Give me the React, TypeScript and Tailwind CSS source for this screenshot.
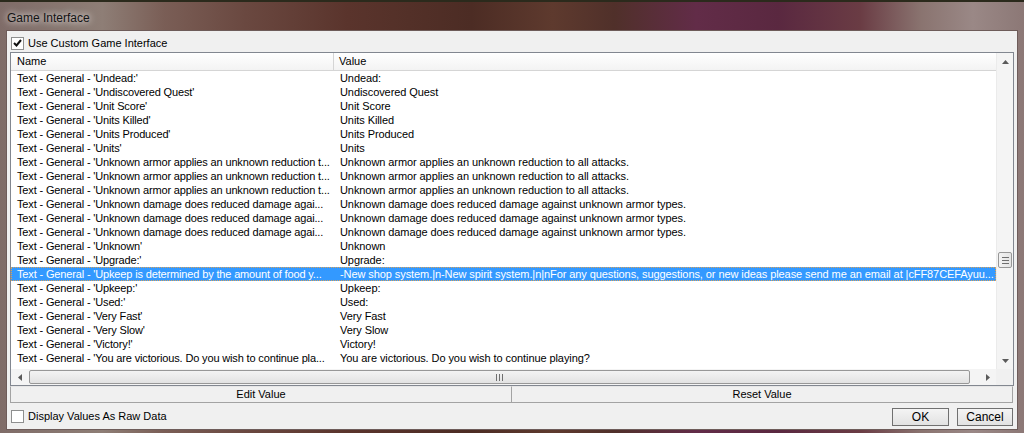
import React from 'react';

interface Row {
  name: string;
  value: string;
}

const rows: Row[] = [
  { name: "Text - General - 'Undead:'", value: 'Undead:' },
  { name: "Text - General - 'Undiscovered Quest'", value: 'Undiscovered Quest' },
  { name: "Text - General - 'Unit Score'", value: 'Unit Score' },
  { name: "Text - General - 'Units Killed'", value: 'Units Killed' },
  { name: "Text - General - 'Units Produced'", value: 'Units Produced' },
  { name: "Text - General - 'Units'", value: 'Units' },
  { name: "Text - General - 'Unknown armor applies an unknown reduction t...", value: 'Unknown armor applies an unknown reduction to all attacks.' },
  { name: "Text - General - 'Unknown armor applies an unknown reduction t...", value: 'Unknown armor applies an unknown reduction to all attacks.' },
  { name: "Text - General - 'Unknown armor applies an unknown reduction t...", value: 'Unknown armor applies an unknown reduction to all attacks.' },
  { name: "Text - General - 'Unknown damage does reduced damage agai...", value: 'Unknown damage does reduced damage against unknown armor types.' },
  { name: "Text - General - 'Unknown damage does reduced damage agai...", value: 'Unknown damage does reduced damage against unknown armor types.' },
  { name: "Text - General - 'Unknown damage does reduced damage agai...", value: 'Unknown damage does reduced damage against unknown armor types.' },
  { name: "Text - General - 'Unknown'", value: 'Unknown' },
  { name: "Text - General - 'Upgrade:'", value: 'Upgrade:' },
  {
    name: "Text - General - 'Upkeep is determined by the amount of food y...",
    value:
      '-New shop system.|n-New spirit system.|n|nFor any questions, suggestions, or new ideas please send me an email at |cFF87CEFAyuu...',
  },
  { name: "Text - General - 'Upkeep:'", value: 'Upkeep:' },
  { name: "Text - General - 'Used:'", value: 'Used:' },
  { name: "Text - General - 'Very Fast'", value: 'Very Fast' },
  { name: "Text - General - 'Very Slow'", value: 'Very Slow' },
  { name: "Text - General - 'Victory!'", value: 'Victory!' },
  { name: "Text - General - 'You are victorious. Do you wish to continue pla...", value: 'You are victorious. Do you wish to continue playing?' },
];

const SELECTED = 14;

function Arrow({ dir }: { dir: 'up' | 'down' | 'left' | 'right' }) {
  const pts = {
    up: '0,4 7,4 3.5,0',
    down: '0,0 7,0 3.5,4',
    left: '4,0 4,7 0,3.5',
    right: '0,0 0,7 4,3.5',
  }[dir];
  const vertical = dir === 'up' || dir === 'down';
  return (
    <svg width={vertical ? 7 : 4} height={vertical ? 4 : 7} viewBox={vertical ? '0 0 7 4' : '0 0 4 7'}>
      <polygon points={pts} fill="#5a5a5a" />
    </svg>
  );
}

export default function App() {
  return (
    <div
      className="flex h-[433px] w-[1024px] flex-col overflow-hidden border-t-2 border-[#2b2a1c] bg-[linear-gradient(90deg,#7f6c68_0%,#8e7e76_10%,#7a5e56_16%,#6a4840_24%,#5a342c_34%,#4c2c24_46%,#5e3a2e_54%,#50302a_60%,#622c48_68%,#5a2840_76%,#6a3c44_84%,#8a7470_90%,#9a8886_95%,#8c7876_100%)] px-[6px] pb-[3px]"
      style={{ fontFamily: '"Liberation Sans", Arial, sans-serif' }}
    >
      {/* Title bar */}
      <div className="flex h-[28px] shrink-0 items-center pl-[1px] pt-[3px]">
        <span className="text-[12px] text-[#141414] [text-shadow:0_0_6px_rgba(255,255,255,0.85),0_0_10px_rgba(255,255,255,0.5)]">
          Game Interface
        </span>
      </div>

      {/* Client area */}
      <div className="flex flex-1 flex-col border border-[#6e5c5a] bg-[#f0f0f0] text-[11px] text-black">
        {/* Use Custom Game Interface */}
        <div className="flex h-[21px] shrink-0 items-center gap-[4px] pl-[4px] pt-[3px]">
          <div className="flex h-[13px] w-[13px] items-center justify-center border border-[#8e8f8f] bg-white">
            <svg width="9" height="8" viewBox="0 0 9 8">
              <path d="M1 4 L3.5 6.5 L8 1" stroke="#111" strokeWidth="2" fill="none" />
            </svg>
          </div>
          <span>Use Custom Game Interface</span>
        </div>

        {/* List view */}
        <div className="ml-[3px] mr-[3px] flex h-[334px] shrink-0 flex-col border border-[#828790] bg-white">
          <div className="flex min-h-0 flex-1">
            <div className="flex min-w-0 flex-1 flex-col">
              {/* Header */}
              <div className="flex h-[18px] shrink-0 border-b border-[#d5d5d5] bg-[linear-gradient(#ffffff,#f3f3f3)]">
                <div className="flex w-[323px] items-center border-r border-[#d5d5d5] pl-[6px]">Name</div>
                <div className="flex flex-1 items-center pl-[5px]">Value</div>
              </div>
              {/* Rows */}
              <div className="min-h-0 flex-1 overflow-hidden">
                {rows.map((row, i) => (
                  <div
                    key={i}
                    className={`flex h-[14px] items-center whitespace-nowrap leading-[14px] ${
                      i === SELECTED ? 'bg-[#3399ff] text-white outline-1 -outline-offset-1 outline-dotted outline-[#d9a15a]' : ''
                    }`}
                  >
                    <div className="w-[323px] shrink-0 overflow-hidden pl-[6px] tracking-[-0.15px]">{row.name}</div>
                    <div className="min-w-0 flex-1 overflow-hidden pl-[6px] tracking-[-0.08px]">{row.value}</div>
                  </div>
                ))}
              </div>
            </div>

            {/* Vertical scrollbar */}
            <div className="flex w-[17px] shrink-0 flex-col border-l border-[#ebebeb] bg-[#f4f4f4]">
              <div className="flex h-[17px] items-center justify-center">
                <Arrow dir="up" />
              </div>
              <div className="h-[182px]" />
              <div className="mx-[1px] flex h-[16px] flex-col items-center justify-center gap-[2px] rounded-[2px] border border-[#979797] bg-[linear-gradient(90deg,#f3f3f3,#e4e4e4)]">
                <div className="h-[1px] w-[7px] bg-[#6f6f6f]" />
                <div className="h-[1px] w-[7px] bg-[#6f6f6f]" />
                <div className="h-[1px] w-[7px] bg-[#6f6f6f]" />
              </div>
              <div className="flex-1" />
              <div className="flex h-[17px] items-center justify-center">
                <Arrow dir="down" />
              </div>
            </div>
          </div>

          {/* Horizontal scrollbar */}
          <div className="flex h-[16px] shrink-0">
            <div className="flex min-w-0 flex-1 items-center bg-[#f4f4f4]">
              <div className="flex h-full w-[17px] items-center justify-center">
                <Arrow dir="left" />
              </div>
              <div className="ml-[1px] flex h-[14px] w-[941px] items-center justify-center gap-[2px] rounded-[2px] border border-[#979797] bg-[linear-gradient(#f3f3f3,#e2e2e2)]">
                <div className="h-[7px] w-[1px] bg-[#6f6f6f]" />
                <div className="h-[7px] w-[1px] bg-[#6f6f6f]" />
                <div className="h-[7px] w-[1px] bg-[#6f6f6f]" />
              </div>
              <div className="flex-1" />
              <div className="flex h-full w-[17px] items-center justify-center">
                <Arrow dir="right" />
              </div>
            </div>
            <div className="w-[17px] shrink-0 bg-[#f0f0f0]" />
          </div>
        </div>

        {/* Edit / Reset buttons */}
        <div className="ml-[3px] mr-[4px] flex h-[17px] shrink-0">
          <div className="flex flex-1 items-center justify-center border border-[#a3a3a3] border-t-[#e6e6e6] bg-[#f0f0f0]">
            Edit Value
          </div>
          <div className="flex flex-1 items-center justify-center border border-l-0 border-[#a3a3a3] border-t-[#e6e6e6] bg-[#f0f0f0]">
            Reset Value
          </div>
        </div>

        {/* Bottom row */}
        <div className="flex flex-1 items-center pl-[4px] pr-[4px] pt-[1px]">
          <div className="mr-[4px] h-[13px] w-[13px] border border-[#8e8f8f] bg-white" />
          <span>Display Values As Raw Data</span>
          <div className="flex-1" />
          <div className="flex h-[18px] w-[57px] items-center justify-center border border-[#707070] bg-[linear-gradient(#f4f4f4,#e2e2e2)] text-[12px]">
            OK
          </div>
          <div className="ml-[8px] flex h-[18px] w-[56px] items-center justify-center border border-[#707070] bg-[linear-gradient(#f4f4f4,#e2e2e2)] text-[12px]">
            Cancel
          </div>
        </div>
      </div>
    </div>
  );
}
